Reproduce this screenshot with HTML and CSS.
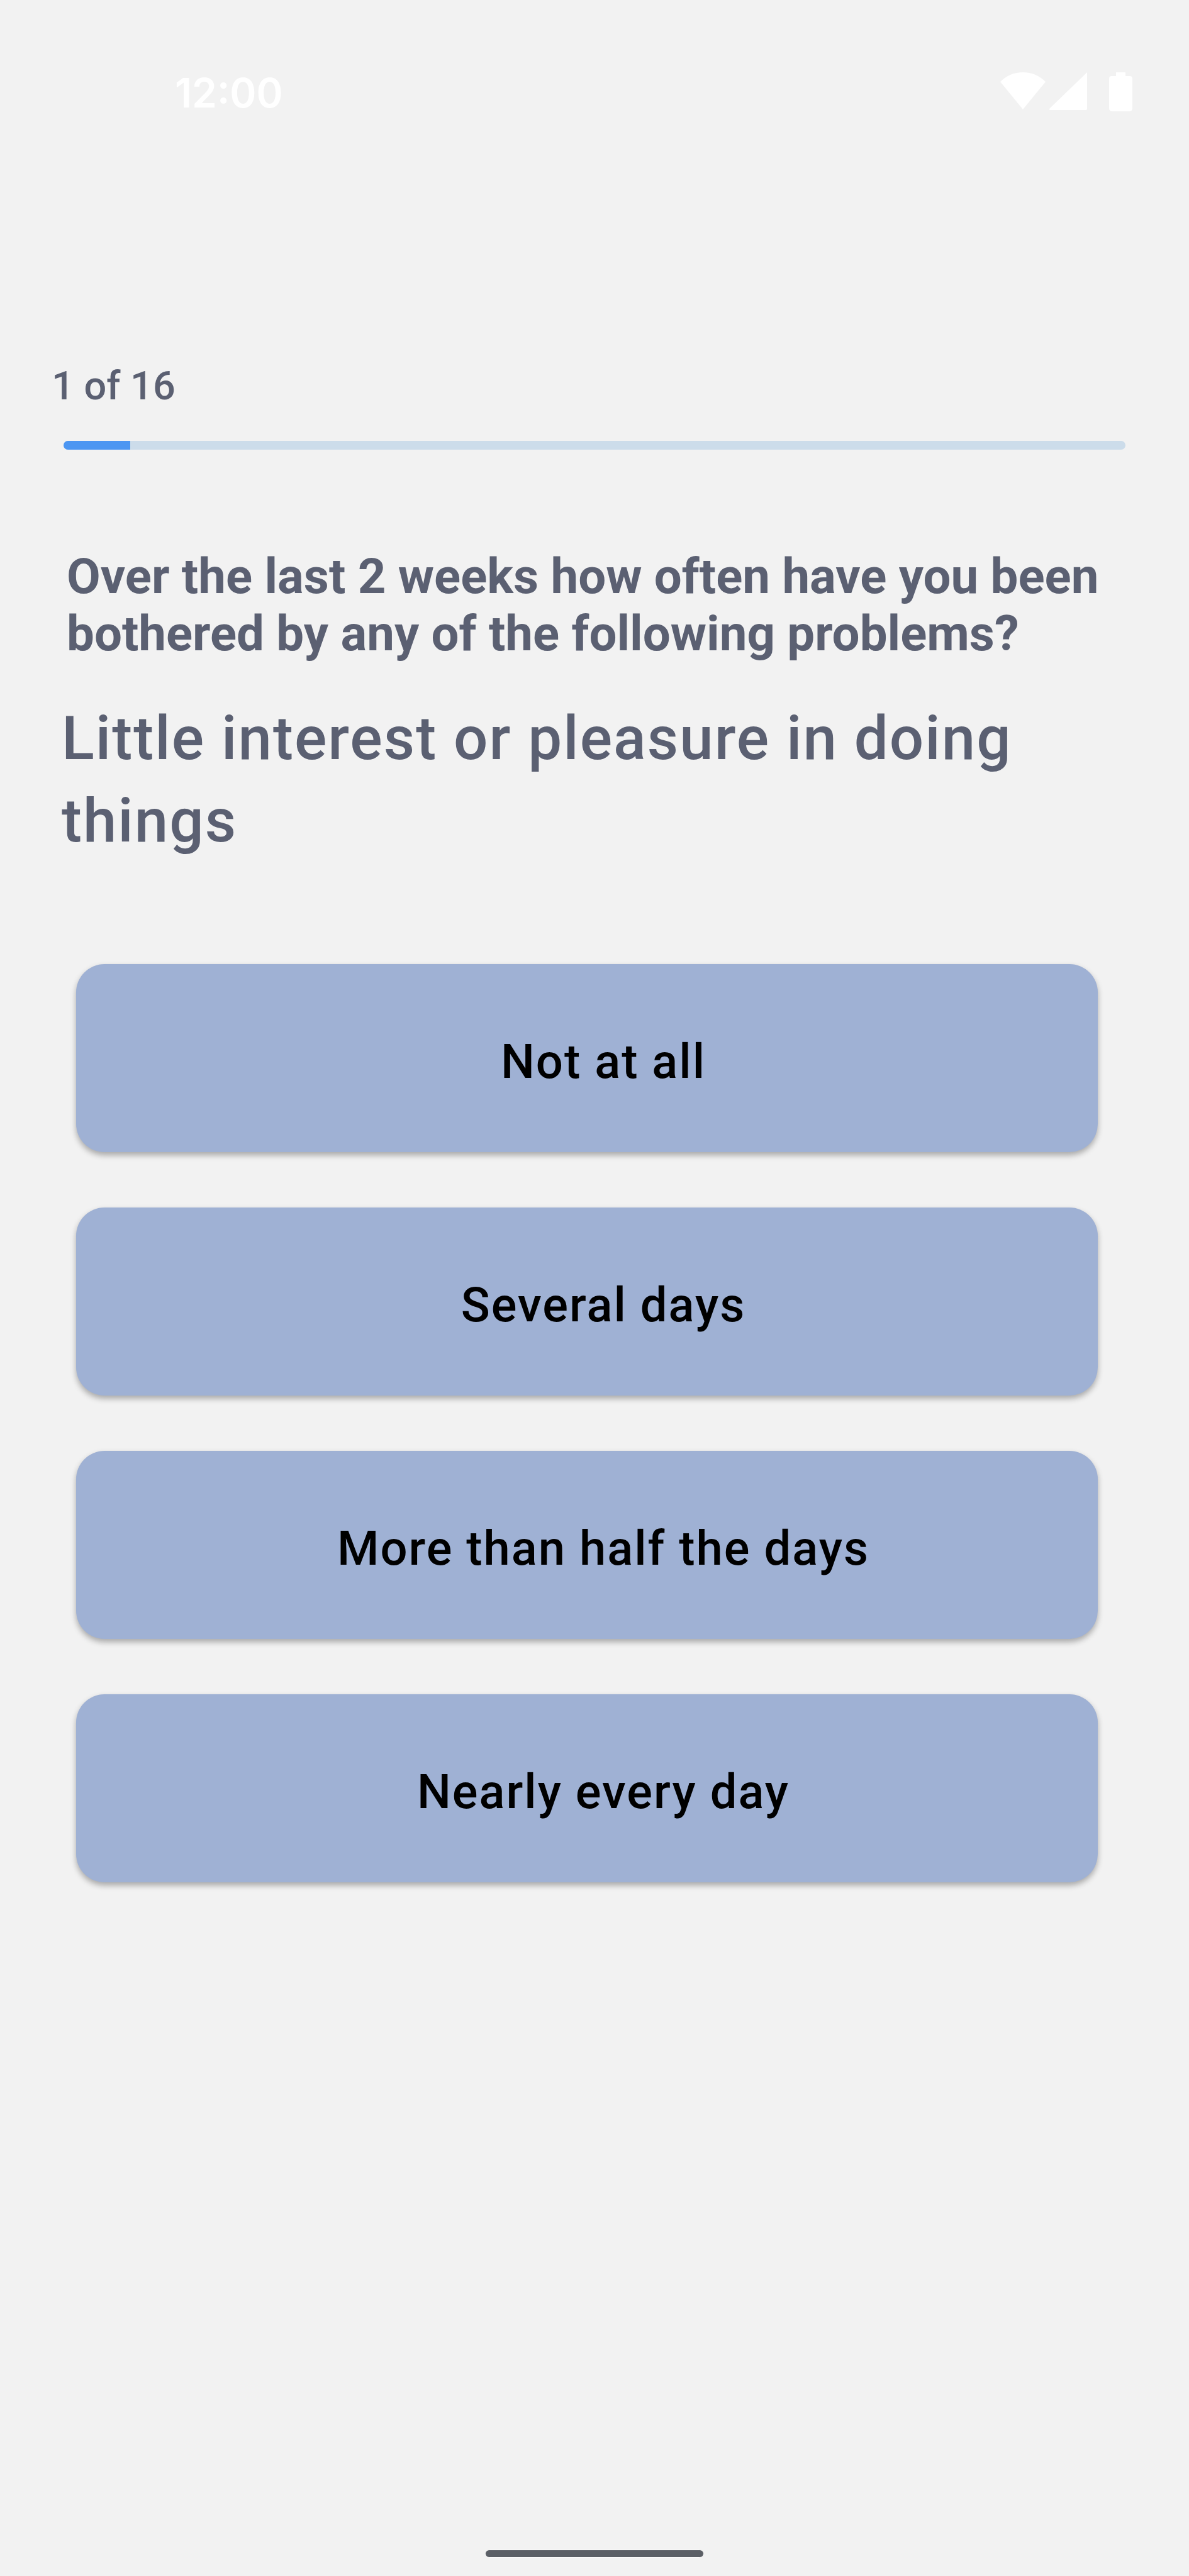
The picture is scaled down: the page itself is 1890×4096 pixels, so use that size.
FILE: index.html
```html
<!DOCTYPE html>
<html lang="en">
<head>
<meta charset="utf-8">
<meta name="viewport" content="width=device-width, initial-scale=1">
<title>Questionnaire</title>
<link rel="stylesheet" href="styles.css">
</head>
<body>
<div class="screen">
  <header class="status-bar">
    <time class="clock">12:00</time>
    <div class="status-icons">
      <svg class="icon-wifi" viewBox="0 0 72 60" aria-hidden="true"><path d="M0 15Q15 0 36 0Q57 0 72 15L36 59Z"/></svg>
      <svg class="icon-signal" viewBox="0 0 60 60" aria-hidden="true"><path d="M60 0V58Q60 60 58 60H1Q-1 59 1 57Z"/></svg>
      <svg class="icon-battery" viewBox="0 0 37 62" aria-hidden="true"><path d="M11 0H26V6H33Q37 6 37 10V57Q37 62 32 62H5Q0 62 0 57V10Q0 6 4 6H11Z"/></svg>
    </div>
  </header>
  <main class="survey">
    <label class="step" for="survey-progress">1 of 16</label>
    <progress class="progress" id="survey-progress" value="1" max="16"></progress>
    <h1 class="intro">Over the last 2 weeks how often have you been bothered by any of the following problems?</h1>
    <h2 class="question">Little interest or pleasure in doing things</h2>
    <div class="answers">
      <button class="answer" type="button">Not at all</button>
      <button class="answer" type="button">Several days</button>
      <button class="answer" type="button">More than half the days</button>
      <button class="answer" type="button">Nearly every day</button>
    </div>
  </main>
  <footer class="nav-bar"><div class="home-handle"></div></footer>
</div>
</body>
</html>
```
FILE: styles.css
```css
* {
  box-sizing: border-box;
}

body {
  margin: 0;
  background: #f2f2f2;
  color: #5b6072;
  font-family: Roboto, "Liberation Sans", sans-serif;
}

.screen {
  display: flex;
  flex-direction: column;
  min-height: 100vh;
}

.status-bar {
  display: flex;
  justify-content: space-between;
  align-items: flex-start;
  padding: 108px 90px 0 278px;
  color: #fff;
}

.clock {
  font: 600 64px/80px Inter, sans-serif;
}

.status-icons {
  display: flex;
  align-items: flex-start;
  padding-top: 7px;
  fill: #fff;
}

.icon-wifi {
  width: 72px;
  height: 60px;
  margin-right: 6px;
}

.icon-signal {
  width: 60px;
  height: 60px;
  margin-right: 35px;
}

.icon-battery {
  width: 37px;
  height: 62px;
}

.survey {
  flex: 1;
  display: flex;
  flex-direction: column;
  padding-top: 388px;
}

.step {
  margin: 0 82px;
  font-size: 63px;
  font-weight: 500;
  line-height: 76px;
}

.progress {
  appearance: none;
  align-self: stretch;
  width: auto;
  height: 14px;
  margin: 49px 101px 0;
  border: 0;
  border-radius: 7px;
  overflow: hidden;
  background: #ccdcea;
}

.progress::-webkit-progress-bar {
  background: #ccdcea;
}

.progress::-webkit-progress-value {
  background: #4c96f2;
}

.intro {
  margin: 156px 106px 0;
  font-size: 78px;
  font-weight: 700;
  line-height: 91px;
}

.question {
  margin: 56px 98px 0;
  font-size: 96px;
  font-weight: 500;
  line-height: 131px;
  letter-spacing: 2px;
}

.answers {
  display: flex;
  flex-direction: column;
  gap: 88px;
  margin: 162px 145px 0 121px;
}

.answer {
  height: 299px;
  padding: 10px 0 0 52px;
  border: 0;
  border-radius: 45px;
  background: #9fb1d4;
  box-shadow: 0 5px 10px rgba(0, 0, 0, 0.3);
  color: #000;
  font-family: inherit;
  font-size: 76px;
  font-weight: 500;
  line-height: 92px;
  letter-spacing: 2px;
}

.nav-bar {
  display: flex;
  justify-content: center;
  padding-bottom: 29px;
}

.home-handle {
  width: 348px;
  height: 13px;
  border: 1px solid #fafafa;
  border-radius: 7px;
  background: #5b5f66;
}
```
